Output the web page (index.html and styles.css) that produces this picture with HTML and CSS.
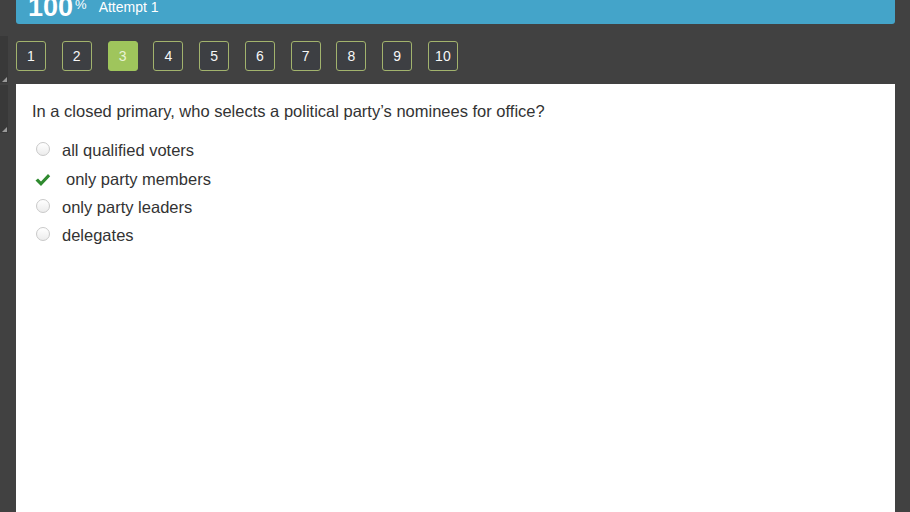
FILE: index.html
```html
<!DOCTYPE html>
<html>
<head>
<meta charset="utf-8">
<link rel="stylesheet" href="styles.css">
</head>
<body>
<div class="page">
  <aside class="side">
    <div class="grip grip-1"></div>
    <div class="grip grip-2"></div>
  </aside>
  <main class="main">
    <header class="banner">
      <div class="banner-inner">
        <span class="score">100</span><span class="pct">%</span>
        <span class="attempt">Attempt 1</span>
      </div>
    </header>
    <nav class="nav">
      <span class="qbtn">1</span>
      <span class="qbtn">2</span>
      <span class="qbtn active">3</span>
      <span class="qbtn">4</span>
      <span class="qbtn">5</span>
      <span class="qbtn">6</span>
      <span class="qbtn">7</span>
      <span class="qbtn">8</span>
      <span class="qbtn">9</span>
      <span class="qbtn">10</span>
    </nav>
    <section class="panel">
      <p class="question">In a closed primary, who selects a political party’s nominees for office?</p>
      <ul class="options">
        <li class="option"><span class="radio"></span><span class="label">all qualified voters</span></li>
        <li class="option"><span class="check"><svg width="17" height="16" viewBox="0 0 17 16"><path d="M1.5 8.6 L4 6.4 L7 9.6 L14 2 L16.2 4.2 L7 14 Z" fill="#2f8a2f"/></svg></span><span class="label label-checked">only party members</span></li>
        <li class="option"><span class="radio"></span><span class="label">only party leaders</span></li>
        <li class="option"><span class="radio"></span><span class="label">delegates</span></li>
      </ul>
    </section>
  </main>
</div>
</body>
</html>
```

FILE: styles.css
```css
html, body {
  margin: 0;
  padding: 0;
  height: 100%;
  background: #414141;
  font-family: "Liberation Sans", Arial, sans-serif;
  overflow: hidden;
}

.page {
  display: flex;
  height: 512px;
}

.side {
  width: 16px;
  flex: none;
  display: flex;
  flex-direction: column;
}

.grip {
  width: 8px;
  background: #393939;
  position: relative;
}

.grip::after {
  content: "";
  position: absolute;
  right: 1px;
  bottom: 1px;
  width: 0;
  height: 0;
  border-left: 5px solid transparent;
  border-bottom: 5px solid #9a9a9a;
}

.grip-1 {
  margin-top: 36px;
  height: 47px;
}

.grip-2 {
  margin-top: 2px;
  height: 48px;
}

.main {
  width: 879px;
  flex: none;
  display: flex;
  flex-direction: column;
}

.banner {
  height: 24px;
  background: #44a4c9;
  border-radius: 0 0 3px 3px;
  overflow: hidden;
  color: #fff;
}

.banner-inner {
  display: flex;
  align-items: flex-start;
  margin-top: -6px;
  padding-left: 12px;
}

.score {
  font-size: 27px;
  font-weight: bold;
  line-height: 26px;
}

.pct {
  font-size: 13px;
  line-height: 13px;
  margin-top: 4px;
  margin-left: 2px;
}

.attempt {
  font-size: 14px;
  line-height: 16px;
  margin-top: 5px;
  margin-left: 12px;
}

.nav {
  display: flex;
  gap: 15.78px;
  padding-top: 17px;
  height: 30px;
}

.qbtn {
  box-sizing: border-box;
  width: 30px;
  height: 30px;
  border: 1px solid #a2b36d;
  border-radius: 3px;
  background: #3d3f43;
  color: #f7f7f7;
  font-size: 14px;
  display: flex;
  align-items: center;
  justify-content: center;
}

.qbtn.active {
  background: #9fc55c;
  border-color: #9fc55c;
  color: #e8f3d5;
}

.panel {
  margin-top: 13px;
  flex: 1;
  background: #fff;
  padding: 17px 16px 0 16px;
}

.question {
  margin: 0 0 15px 0;
  font-size: 16.5px;
  line-height: 20px;
  color: #333;
}

.options {
  list-style: none;
  margin: 0;
  padding: 0;
}

.option {
  height: 28.4px;
  display: flex;
  align-items: center;
  font-size: 16.5px;
  color: #333;
}

.radio {
  box-sizing: border-box;
  width: 14px;
  height: 14px;
  border-radius: 50%;
  border: 1px solid #c9c9c9;
  background: linear-gradient(#ffffff, #ececec);
  margin-left: 4px;
  margin-top: -2px;
  margin-right: 12px;
}

.check {
  width: 17px;
  height: 16px;
  margin-left: 2px;
  margin-right: 11px;
  margin-top: 3px;
  display: flex;
}

.label {
  line-height: 18px;
}

.label-checked {
  padding-left: 4px;
}
```
